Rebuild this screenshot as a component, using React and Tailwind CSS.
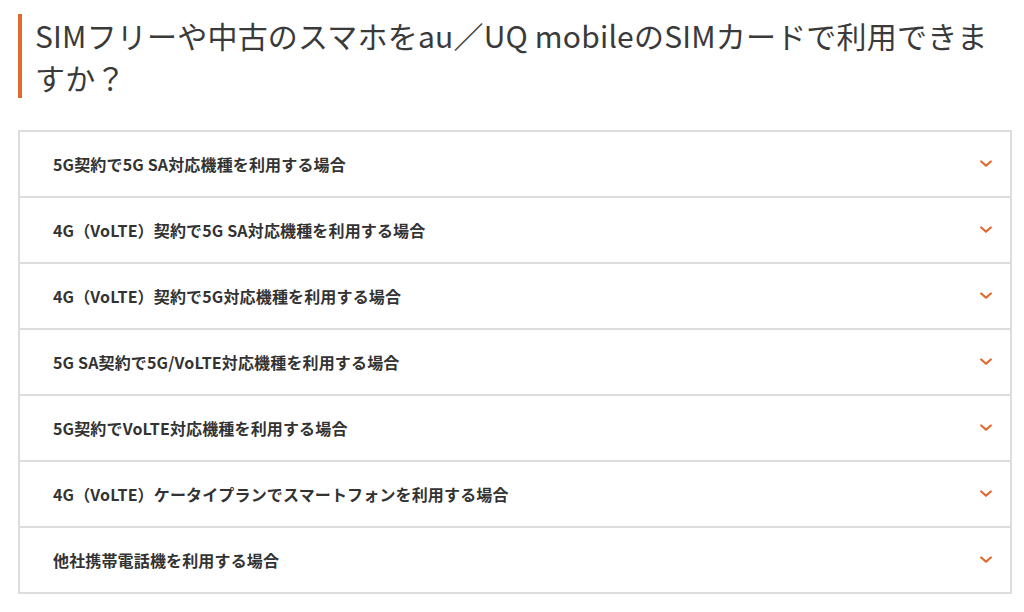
import React from 'react';

const items = [
    '5G契約で5G SA対応機種を利用する場合',
    '4G（VoLTE）契約で5G SA対応機種を利用する場合',
    '4G（VoLTE）契約で5G対応機種を利用する場合',
    '5G SA契約で5G/VoLTE対応機種を利用する場合',
    '5G契約でVoLTE対応機種を利用する場合',
    '4G（VoLTE）ケータイプランでスマートフォンを利用する場合',
    '他社携帯電話機を利用する場合',
];

const Chevron = () => (
    <svg width="12" height="8" viewBox="0 0 12 8" fill="none">
        <path d="M1.2 1.5 L6 5.8 L10.8 1.5" stroke="#e2692f" strokeWidth="2.2" strokeLinecap="round" strokeLinejoin="round" />
    </svg>
);

export default function App() {
    return (
        <div className="min-h-screen bg-white pt-[14px] pl-[18px] pr-[12px]" style={{ fontFamily: '"Noto Sans CJK JP", "Noto Sans", sans-serif' }}>
            {/* Heading */}
            <div className="border-l-4 border-[#e2692f] pl-[13px] pr-[20px]">
                <h2 className="text-[30px] leading-[42px] tracking-[0.2px] text-[#3a3a3a]">
                    SIMフリーや中古のスマホをau／UQ mobileのSIMカードで利用できますか？
                </h2>
            </div>

            {/* Accordion */}
            <div className="mt-[32px] border-2 border-[#dddddd] divide-y-2 divide-[#dddddd]">
                {items.map((item, index) => (
                    <div
                        key={index}
                        className="box-content flex items-center justify-between h-[64px] pl-[33px] pr-[18px]"
                    >
                        <span className="text-[16px] font-bold tracking-[0.15px] text-[#333333]">{item}</span>
                        <Chevron />
                    </div>
                ))}
            </div>
        </div>
    );
}
